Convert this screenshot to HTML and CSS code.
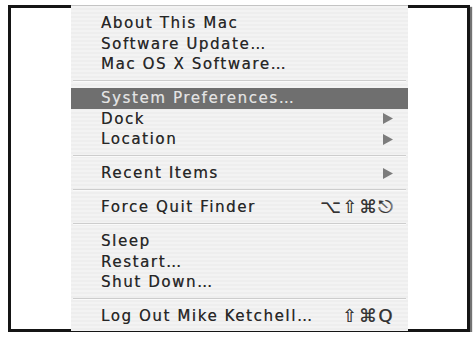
FILE: index.html
```html
<!DOCTYPE html>
<html>
<head>
<meta charset="utf-8">
<link rel="stylesheet" href="styles.css">
</head>
<body>
<div class="frame">
  <div class="menu">
    <div class="item">About This Mac</div>
    <div class="item">Software Update…</div>
    <div class="item">Mac OS X Software…</div>
    <div class="sep"></div>
    <div class="item selected">System Preferences…</div>
    <div class="item">Dock<svg class="arrow" viewBox="0 0 10 11"><polygon points="0,0 10,5.5 0,11"/></svg></div>
    <div class="item">Location<svg class="arrow" viewBox="0 0 10 11"><polygon points="0,0 10,5.5 0,11"/></svg></div>
    <div class="sep"></div>
    <div class="item">Recent Items<svg class="arrow" viewBox="0 0 10 11"><polygon points="0,0 10,5.5 0,11"/></svg></div>
    <div class="sep"></div>
    <div class="item">Force Quit Finder<span class="key">⌥⇧⌘⎋</span></div>
    <div class="sep"></div>
    <div class="item">Sleep</div>
    <div class="item">Restart…</div>
    <div class="item">Shut Down…</div>
    <div class="sep"></div>
    <div class="item">Log Out Mike Ketchell…<span class="key">⇧⌘Q</span></div>
  </div>
</div>
</body>
</html>
```

FILE: styles.css
```css
html, body {
  margin: 0;
  padding: 0;
  background: #ffffff;
}
body {
  padding: 5px 0 0 8px;
}
.frame {
  box-sizing: border-box;
  width: 462px;
  height: 327px;
  border: 3px solid #151515;
  background: #ffffff;
  box-shadow: 2px 2px 1px rgba(0, 0, 0, 0.55);
  display: flex;
  flex-direction: column;
}
.menu {
  box-sizing: border-box;
  width: 337px;
  height: 326px;
  margin: -3px 0 0 60px;
  padding: 7px 0 4px 0;
  border-top: 1px solid #c4c4c4;
  background-color: #f1f1f1;
  background-image: repeating-linear-gradient(to bottom, #f3f3f3 0, #f3f3f3 2px, #eeeeee 2px, #eeeeee 4px);
  font-family: "DejaVu Sans", "Verdana", sans-serif;
  font-size: 15px;
  letter-spacing: 1.6px;
  color: #262626;
  text-shadow: 0.35px 0 0 rgba(40, 40, 40, 0.6);
  display: flex;
  flex-direction: column;
}
.item {
  height: 20.5px;
  line-height: 20.5px;
  padding: 0 15px 0 30px;
  display: flex;
  align-items: center;
  justify-content: space-between;
  white-space: nowrap;
}
.item.selected {
  background: #6f6f6f;
  color: #e4e4e4;
  text-shadow: 0.35px 0 0 rgba(220, 220, 220, 0.5);
}
.sep {
  height: 13.5px;
  display: flex;
  align-items: center;
  padding: 0 2px;
}
.sep::before {
  content: "";
  flex: 1;
  border-top: 1px solid #cdcdcd;
  border-bottom: 1px solid #fafafa;
}
.arrow {
  width: 10px;
  height: 11px;
  fill: #7c7c7c;
}
.key {
  color: #333333;
  font-size: 18px;
  line-height: 20px;
  letter-spacing: 1.5px;
  margin-right: -1px;
}
```
